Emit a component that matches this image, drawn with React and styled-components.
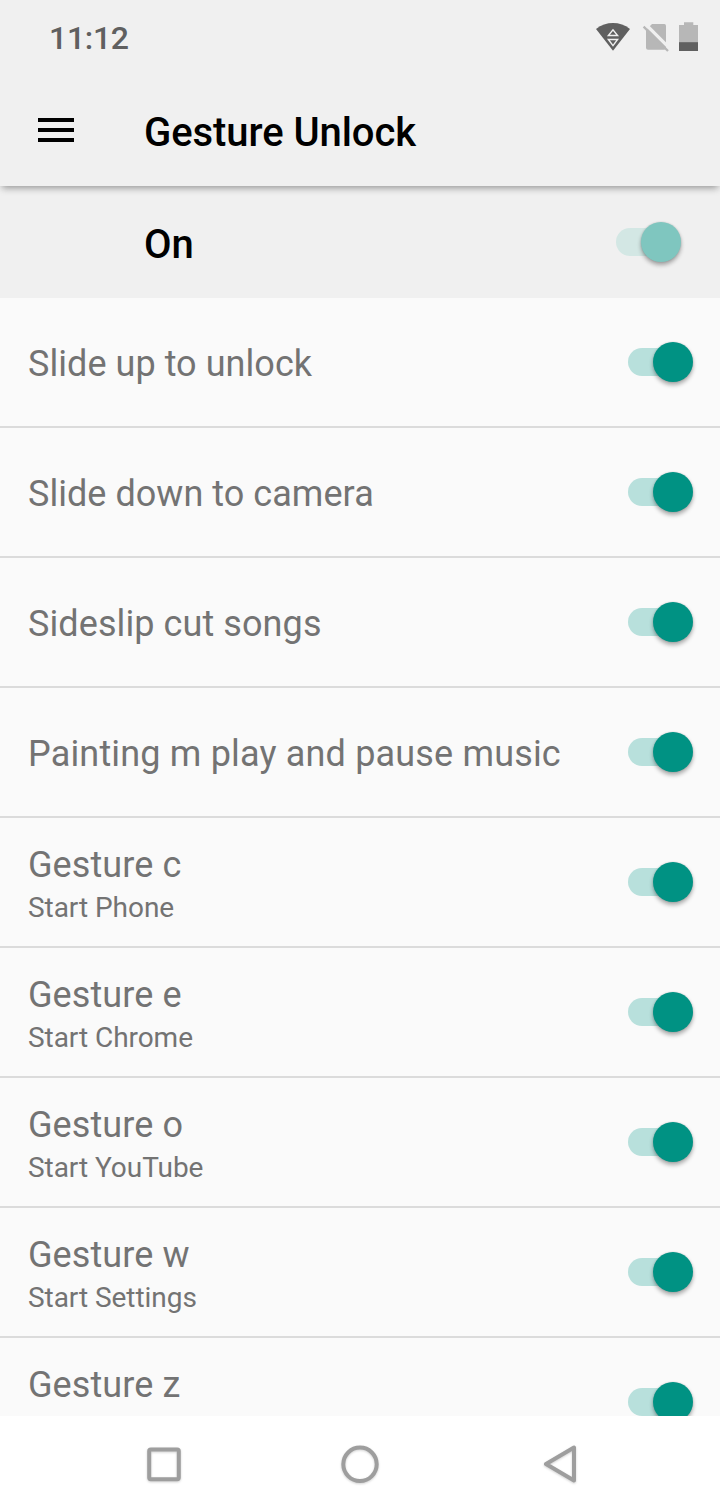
import React from 'react';
import styled, { createGlobalStyle } from 'styled-components';

const gestures = [
    { title: 'Slide up to unlock', tracking: 0.05 },
    { title: 'Slide down to camera', tracking: 0.04 },
    { title: 'Sideslip cut songs' },
    { title: 'Painting m play and pause music', tracking: 0.17 },
    { title: 'Gesture c', action: 'Start Phone' },
    { title: 'Gesture e', action: 'Start Chrome' },
    { title: 'Gesture o', action: 'Start YouTube' },
    { title: 'Gesture w', action: 'Start Settings' },
    // no app assigned yet, keeps the two line layout
    { title: 'Gesture z', action: '\u00a0' },
];

const Switch = ({ faded }) => (
    <SwitchTrack role="switch" aria-checked="true" $faded={faded}>
        <SwitchThumb $faded={faded} />
    </SwitchTrack>
);

const StatusIcons = () => (
    <svg width="104" height="32" viewBox="0 0 104 32">
        <path d="M0 7C10 -0.9 24 -0.9 34 7L17 28.8Z" fill="#606060" />
        <path d="M12.4 13.5L17 7.8L21.6 13.5ZM12.4 17.5L17 23.6L21.6 17.5Z" fill="none" stroke="#f0f0f0" strokeWidth="1.4" />
        <path d="M56 2H68.3Q70 2 70 3.7V25.7Q70 27.7 68 27.7H52Q50 27.7 50 25.7V8Z" fill="#b7b7b7" />
        <path d="M49.3 2L74 26.7" stroke="#f0f0f0" strokeWidth="3.2" />
        <path d="M47.6 4.6L72 29" stroke="#b7b7b7" strokeWidth="2.3" />
        <path d="M83 3H88V0.2H97.3V3H102V29H83Z" fill="#b7b7b7" />
        <path d="M83 20.2H102V29H83Z" fill="#606060" />
    </svg>
);

export default function App() {
    return (
        <Screen>
            <GlobalStyle />
            <Header>
                <StatusBar>
                    <Clock>11:12</Clock>
                    <StatusIcons />
                </StatusBar>
                <Toolbar>
                    <MenuIcon viewBox="0 0 36 24">
                        <path d="M0 0H36V4H0ZM0 10H36V14H0ZM0 20H36V24H0Z" />
                    </MenuIcon>
                    <PageTitle>Gesture Unlock</PageTitle>
                </Toolbar>
            </Header>
            <MasterRow>
                <MasterLabel>On</MasterLabel>
                <Switch faded />
            </MasterRow>
            <List>
                {gestures.map(({ title, action, tracking }) => (
                    <Row key={title}>
                        <RowText $single={!action}>
                            <RowTitle $tracking={tracking}>{title}</RowTitle>
                            {action && <RowAction>{action}</RowAction>}
                        </RowText>
                        <Switch />
                    </Row>
                ))}
            </List>
            <NavBar>
                <NavIcon viewBox="0 0 48 48">
                    <rect x="9.2" y="9.6" width="29.6" height="29.6" rx="1.6" />
                </NavIcon>
                <NavIcon viewBox="0 0 48 48">
                    <circle cx="24" cy="24.3" r="16.7" />
                </NavIcon>
                <NavIcon viewBox="0 0 48 48">
                    <path d="M14 24L42 7.6V40.4Z" />
                </NavIcon>
            </NavBar>
        </Screen>
    );
}

const GlobalStyle = createGlobalStyle`
    body {
        margin: 0;
        font-family: Roboto, sans-serif;
        overflow: hidden;
    }

    * {
        box-sizing: border-box;
    }
`;

const Screen = styled.div`
    width: 720px;
    height: 1512px;
    display: flex;
    flex-direction: column;
    overflow: hidden;
    background: #fafafa;
`;

const Header = styled.header`
    height: 186px;
    flex: none;
    z-index: 1;
    background: #f0f0f0;
    box-shadow: 0 4px 7px -2px rgba(0, 0, 0, 0.38);
`;

const StatusBar = styled.div`
    height: 76px;
    padding: 0 20px 0 49px;
    display: flex;
    align-items: center;
    justify-content: space-between;
`;

const Clock = styled.span`
    font-size: 32px;
    font-weight: 500;
    line-height: 38px;
    letter-spacing: -0.3px;
    color: #606060;
`;

const Toolbar = styled.div`
    height: 110px;
    padding: 0 38px;
    display: flex;
    align-items: center;
    gap: 70px;
`;

const MenuIcon = styled.svg`
    width: 36px;
    height: 24px;
    margin-bottom: 2px;
`;

const PageTitle = styled.h1`
    margin: 0;
    padding-top: 4px;
    font-size: 40px;
    font-weight: 500;
    line-height: 48px;
    letter-spacing: -0.07px;
    color: #000;
`;

const MasterRow = styled.div`
    height: 112px;
    flex: none;
    padding: 0 36px 0 144px;
    display: flex;
    align-items: center;
    justify-content: space-between;
    background: #f0f0f0;
`;

const MasterLabel = styled.span`
    padding-top: 6px;
    font-size: 40px;
    font-weight: 500;
    line-height: 48px;
    color: #000;
`;

const List = styled.div`
    flex: 1;
    min-height: 0;
    overflow: hidden;
`;

const Row = styled.div`
    height: 130px;
    padding: 0 24px 0 28px;
    display: flex;
    align-items: center;
    justify-content: space-between;
    border-bottom: 2px solid #dbdbdb;
`;

const RowText = styled.div`
    padding-top: ${({ $single }) => ($single ? 4 : 5)}px;
    display: flex;
    flex-direction: column;
    color: #737373;
`;

const RowTitle = styled.span`
    font-size: 36px;
    line-height: 46px;
    letter-spacing: ${({ $tracking = 0.09 }) => $tracking}px;
`;

const RowAction = styled.span`
    font-size: 28px;
    line-height: 39px;
    letter-spacing: -0.05px;
`;

const SwitchTrack = styled.div`
    width: 68px;
    height: 28px;
    padding-left: 25px;
    display: flex;
    align-items: center;
    border-radius: 14px;
    background: linear-gradient(
        to right,
        ${({ $faded }) => ($faded ? '#d3e7e4' : '#b8e0dc')} 45px,
        transparent 45px
    );
`;

const SwitchThumb = styled.div`
    width: 40px;
    height: 40px;
    flex: none;
    border-radius: 50%;
    background: ${({ $faded }) => ($faded ? '#7fc6bf' : '#009283')};
    box-shadow: 0 3px 4px rgba(0, 0, 0, 0.32), 0 0 2px rgba(0, 0, 0, 0.14);
`;

const NavBar = styled.nav`
    height: 96px;
    flex: none;
    padding: 0 136px;
    display: flex;
    align-items: center;
    justify-content: space-between;
    background: #fff;
`;

const NavIcon = styled.svg`
    width: 48px;
    height: 48px;
    margin: 0 4px;
    fill: none;
    stroke: #9e9e9e;
    stroke-width: 4;
    stroke-linejoin: round;
    filter: drop-shadow(0 1px 1px rgba(0, 0, 0, 0.18));
`;
